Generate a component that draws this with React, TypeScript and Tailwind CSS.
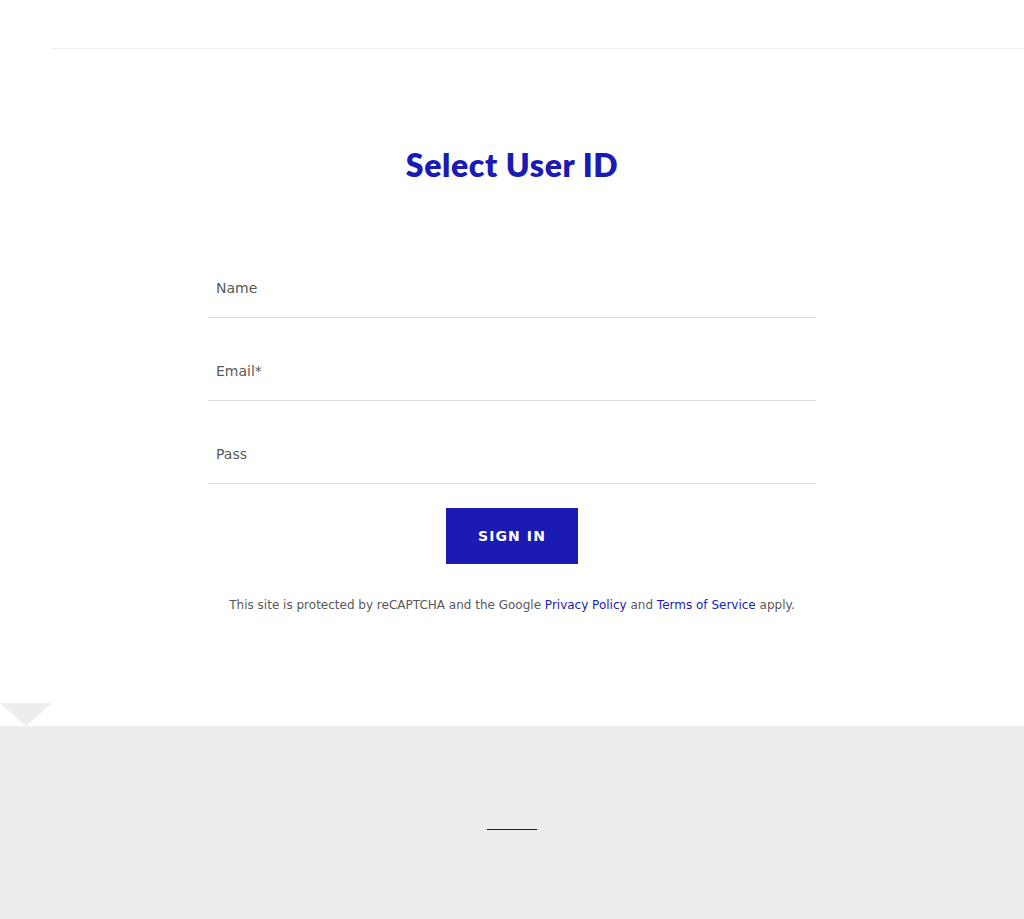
import React from "react";

const fields = ["Name", "Email*", "Pass"];

export default function App() {
  return (
    <div className="min-h-[919px] bg-white flex flex-col" style={{ fontFamily: '"DejaVu Sans", sans-serif' }}>
      <header className="h-[49px] flex">
        <div className="w-[52px]" />
        <div className="flex-1 border-b border-[#ededed]" />
      </header>

      <main className="flex-1 flex flex-col items-center pt-[96px]">
        <h1
          className="text-[32px] leading-[40px] font-extrabold text-[#1a1ab4] tracking-[0.6px]"
          style={{ fontFamily: '"Lato", sans-serif' }}
        >
          Select User ID
        </h1>

        <form className="w-[608px] mt-[50px] flex flex-col" onSubmit={(e) => e.preventDefault()}>
          {fields.map((f) => (
            <label key={f} className="block h-[83px] pt-[30px] border-b border-[#dcdcdc]">
              <input
                placeholder={f}
                className="w-full px-2 py-[13px] text-[14px] leading-[20px] text-[#595959] placeholder:text-[#595959] outline-none bg-transparent"
              />
            </label>
          ))}
          <div className="flex justify-center mt-[24px]">
            <button className="w-[132px] h-[56px] bg-[#1b1bb3] text-white text-[14px] font-bold tracking-[1.1px]">
              SIGN IN
            </button>
          </div>
        </form>

        <p className="mt-[33px] text-[12px] leading-[16px] text-[#595959]">
          This site is protected by reCAPTCHA and the Google{" "}
          <a className="text-[#1b1bb3]">Privacy Policy</a> and{" "}
          <a className="text-[#1b1bb3]">Terms of Service</a> apply.
        </p>
      </main>

      <div className="h-[22px] mt-[90px] relative">
        <div className="absolute left-0 -top-px w-0 h-0 border-l-[26px] border-r-[26px] border-t-[23px] border-l-transparent border-r-transparent border-t-[#ededed]" />
      </div>
      <footer className="h-[193px] bg-[#ededed] flex justify-center pt-[103px]">
        <div className="w-[50px] h-px bg-[#1f1f1f]" />
      </footer>
    </div>
  );
}
